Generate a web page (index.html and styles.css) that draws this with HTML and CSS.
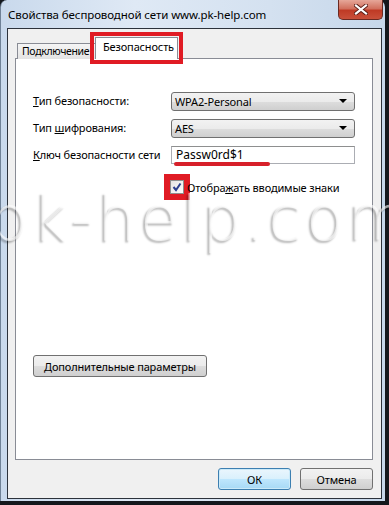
FILE: index.html
```html
<!DOCTYPE html>
<html lang="ru">
<head>
<meta charset="utf-8">
<link rel="stylesheet" href="styles.css">
</head>
<body>
<div class="window">
  <div class="frame">
    <div class="titlebar">
      <span class="title">Свойства беспроводной сети www.pk-help.com</span>
      <div class="close">
        <svg width="14" height="11" viewBox="0 0 14 11"><path d="M2 1.5 L12 9.5 M12 1.5 L2 9.5" stroke="#5a1d16" stroke-width="4" stroke-linecap="square"/><path d="M2 1.5 L12 9.5 M12 1.5 L2 9.5" stroke="#fff" stroke-width="2.2" stroke-linecap="square"/></svg>
      </div>
    </div>
    <div class="client">
      <div class="tabs">
        <div class="tab">Подключение</div>
        <div class="tab active">Безопасность</div>
      </div>
      <div class="panel">
        <div class="form">
          <label class="lbl"><u>Т</u>ип безопасности:</label>
          <div class="combo"><span>WPA2-Personal</span><i class="arrow"></i></div>
          <label class="lbl"><span>Тип <u>ш</u>ифрования:</span></label>
          <div class="combo"><span>AES</span><i class="arrow"></i></div>
          <label class="lbl"><u>К</u>люч безопасности сети</label>
          <div class="input"><span>Passw0rd$1</span><i class="mark"></i></div>
        </div>
        <div class="check-row">
          <span class="checkbox">
            <svg width="10" height="10" viewBox="0 0 10 10"><path d="M1.5 5 L4 8 L8.5 1.5" fill="none" stroke="#2a3f8f" stroke-width="2"/></svg>
          </span>
          <span class="check-label">Отобра<u>ж</u>ать вводимые знаки</span>
        </div>
        <div class="spacer"></div>
        <button class="btn adv"><u>Д</u>ополнительные параметры</button>
      </div>
      <div class="footer">
        <button class="btn ok">ОК</button>
        <button class="btn">Отмена</button>
      </div>
    </div>
  </div>
  <div class="watermark">pk-help.com</div>
</div>
</body>
</html>
```

FILE: styles.css
```css
* { box-sizing: border-box; }
html, body { margin: 0; padding: 0; }
body {
  font-family: "Noto Sans", "Open Sans", sans-serif;
  font-size: 11px;
  letter-spacing: -0.15px;
  color: #000;
  background: #1b1e24;
}
.window {
  position: relative;
  width: 389px;
  height: 505px;
  overflow: hidden;
  background: #14171c;
}
.frame {
  width: 385px;
  height: 501px;
  border-radius: 7px 7px 0 0;
  background: linear-gradient(to right, #c9d9ec, #dfe9f5 35%, #d4e1f0 70%, #c6d7ea);
  display: flex;
  flex-direction: column;
  padding: 0 3px 2px 6px;
  border-left: 1px solid #6f8196;
}
.titlebar {
  height: 28px;
  display: flex;
  align-items: flex-start;
  padding-left: 1px;
}
.title {
  margin-top: 7px;
  font-size: 11.5px;
  letter-spacing: -0.1px;
  color: #000;
}
.close {
  margin-left: auto;
  margin-right: -1px;
  width: 45px;
  height: 20px;
  border: 1px solid #6a2a22;
  border-top: none;
  border-radius: 0 0 5px 5px;
  background: linear-gradient(#e6a799, #d1705e 45%, #bf3a25 55%, #c9503a);
  display: flex;
  align-items: center;
  justify-content: center;
}
.client {
  flex: 1;
  background: #f0f0f0;
  border: 1px solid #2c323b;
  display: flex;
  flex-direction: column;
  padding: 8px 8px 0 7px;
}
.tabs {
  display: flex;
  align-items: flex-end;
  padding-left: 2px;
  height: 22px;
  position: relative;
  z-index: 1;
  margin-bottom: -1px;
}
.tab {
  height: 16px;
  padding: 0 2px 0 4px;
  border: 1px solid #898c95;
  border-bottom: none;
  background: linear-gradient(#f5f5f5, #e3e3e3);
  line-height: 14px;
  width: 79px;
  white-space: nowrap;
  font-size: 10.5px;
  letter-spacing: -0.35px;
}
.tab.active {
  height: 22px;
  width: 83px;
  background: #fff;
  padding-left: 7px;
  line-height: 17px;
  margin-left: -1px;
  font-size: 11px;
  letter-spacing: -0.15px;
  outline: 4px solid #e01b24;
  outline-offset: 1px;
}
.panel {
  height: 402px;
  background: #fff;
  border: 1px solid #898c95;
  display: flex;
  flex-direction: column;
  padding: 33px 0 0 17px;
}
.form {
  display: grid;
  grid-template-columns: 138px 184px;
  grid-template-rows: 18px 18px 17px;
  row-gap: 9px;
  align-items: center;
}
.lbl { line-height: 14px; }
.combo {
  height: 19px;
  border: 1px solid #707070;
  border-radius: 3px;
  background: linear-gradient(#f2f2f2 0%, #ebebeb 50%, #dddddd 51%, #cfcfcf 100%);
  display: flex;
  align-items: center;
  padding: 0 7px 0 3px;
}
.combo span { flex: 1; }
.arrow {
  width: 0;
  height: 0;
  border-left: 4px solid transparent;
  border-right: 4px solid transparent;
  border-top: 4px solid #000;
}
.input {
  position: relative;
  height: 18px;
  border: 1px solid #abadb3;
  border-top-color: #8e8f8f;
  background: #fff;
  display: flex;
  align-items: center;
  padding-left: 4px;
  font-size: 12px;
  letter-spacing: 0;
}
.mark {
  position: absolute;
  left: 2px;
  top: 15px;
  width: 96px;
  height: 4px;
  border-radius: 2px;
  background: #d7202a;
}
.check-row {
  display: flex;
  align-items: center;
  margin-top: 17px;
  padding-left: 137px;
  height: 14px;
}
.checkbox {
  flex: none;
  width: 14px;
  height: 14px;
  border: 1px solid #8e8f8f;
  background: linear-gradient(135deg, #e4e4e4, #fdfdfd);
  display: flex;
  align-items: center;
  justify-content: center;
  outline: 6px solid #e01b24;
}
.check-label {
  margin-left: 3px;
  position: relative;
  z-index: 1;
}
.spacer { height: 161px; }
.btn {
  font-family: inherit;
  font-size: 11px;
  letter-spacing: -0.15px;
  height: 22px;
  border: 1px solid #707070;
  border-radius: 3px;
  background: linear-gradient(#f2f2f2 0%, #ebebeb 50%, #dddddd 51%, #cfcfcf 100%);
  padding: 0;
  color: #000;
}
.adv { width: 174px; }
.footer {
  display: flex;
  justify-content: flex-end;
  gap: 9px;
  padding: 8px 0 0 0;
}
.footer .btn { width: 73px; }
.btn.ok {
  border-color: #3c7fb1;
  background: linear-gradient(#eaf6fd 0%, #d9f0fc 50%, #bee6fd 51%, #a7d9f5 100%);
  box-shadow: inset 0 0 0 1px #cbeaf9;
}
.watermark {
  position: absolute;
  left: -11px;
  top: 189px;
  line-height: 60px;
  height: 70px;
  font-family: "DejaVu Sans", "Lato", sans-serif;
  font-weight: 200;
  font-size: 62px;
  letter-spacing: 3.5px;
  color: rgba(255, 255, 255, 0.6);
  text-shadow: -2px 2px 2px rgba(0, 0, 0, 0.28);
  pointer-events: none;
  white-space: nowrap;
}
```
